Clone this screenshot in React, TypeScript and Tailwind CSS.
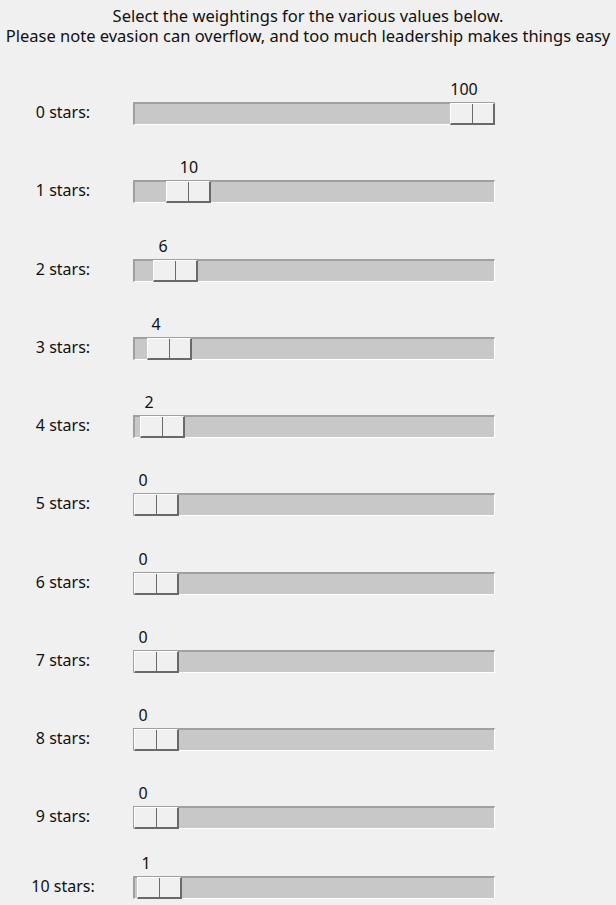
const rows = [
  { stars: 0, value: 100, labelX: 464, gap: 'mt-[35px]' },
  { stars: 1, value: 10, labelX: 189, gap: 'mt-[34px]' },
  { stars: 2, value: 6, labelX: 163, gap: 'mt-[35px]' },
  { stars: 3, value: 4, labelX: 156, gap: 'mt-[34px]' },
  { stars: 4, value: 2, labelX: 149, gap: 'mt-[34px]' },
  { stars: 5, value: 0, labelX: 143, gap: 'mt-[34px]' },
  { stars: 6, value: 0, labelX: 143, gap: 'mt-[35px]' },
  { stars: 7, value: 0, labelX: 143, gap: 'mt-[34px]' },
  { stars: 8, value: 0, labelX: 143, gap: 'mt-[34px]' },
  { stars: 9, value: 0, labelX: 143, gap: 'mt-[34px]' },
  { stars: 10, value: 1, labelX: 146, gap: 'mt-[26px]' },
];

const TRACK_LEFT = 133;

function Slider({ value, labelX }: { value: number; labelX: number }) {
  const thumbLeft = 1 + Math.round(value * 3.16);
  return (
    <div className="ml-[7px] w-[362px]">
      <div className="relative h-[16px]">
        <span
          className="absolute top-0 -translate-x-1/2 leading-[16px]"
          style={{ left: labelX - TRACK_LEFT }}
        >
          {value}
        </span>
      </div>
      <div className="relative mt-[5px] h-[23px] border-t-2 border-l-2 border-r border-b border-t-[#a0a0a0] border-l-[#a0a0a0] border-r-white border-b-white bg-[#c8c8c8]">
        <div
          className="absolute -top-[1px] flex h-[22px] w-[45px] border-t border-l border-r-2 border-b-2 border-t-white border-l-white border-r-[#696969] border-b-[#696969] bg-[#f0f0f0]"
          style={{ left: thumbLeft - 2 }}
        >
          <div className="flex-1 border-r border-[#696969]" />
          <div className="flex-1" />
        </div>
      </div>
    </div>
  );
}

export default function App() {
  return (
    <div
      className="h-[905px] w-[616px] overflow-hidden bg-[#f0f0f0] text-[16px] text-[#111]"
      style={{ fontFamily: '"Noto Sans", "Open Sans", sans-serif' }}
    >
      <div className="-mx-[40px] pt-[6px] text-center text-[16.5px] leading-[20px] whitespace-nowrap">
        <div className="h-[20px]">Select the weightings for the various values below.</div>
        <div className="h-[20px]">Please note evasion can overflow, and too much leadership makes things easy</div>
      </div>

      {rows.map((r) => (
        <div key={r.stars} className={`flex ${r.gap}`}>
          <div className="flex w-[126px] flex-col justify-end">
            <div className="flex h-[23px] items-center justify-center pb-[4px] leading-[18px]">
              {r.stars} stars:
            </div>
          </div>
          <Slider value={r.value} labelX={r.labelX} />
        </div>
      ))}
    </div>
  );
}
